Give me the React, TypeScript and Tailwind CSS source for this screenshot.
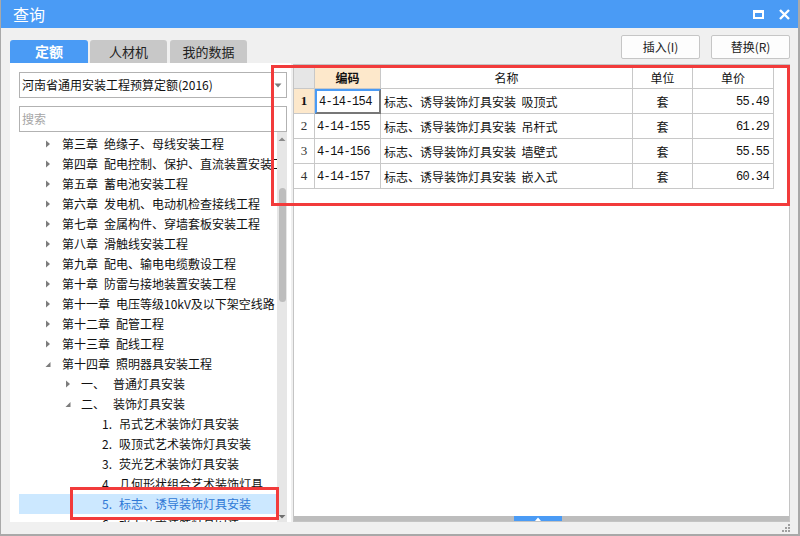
import type { ReactNode } from "react";

const CJK = { fontFamily: '"Noto Sans CJK SC", "Liberation Sans", sans-serif' };
const MONO = { fontFamily: '"Liberation Mono", "Noto Sans CJK SC", monospace' };

type TreeRow = {
  level: 0 | 1 | 2;
  arrow?: "right" | "down";
  head: string;
  text: string;
  selected?: boolean;
};

const treeRows: TreeRow[] = [
  { level: 0, arrow: "right", head: "第三章", text: "绝缘子、母线安装工程" },
  { level: 0, arrow: "right", head: "第四章", text: "配电控制、保护、直流装置安装工程" },
  { level: 0, arrow: "right", head: "第五章", text: "蓄电池安装工程" },
  { level: 0, arrow: "right", head: "第六章", text: "发电机、电动机检查接线工程" },
  { level: 0, arrow: "right", head: "第七章", text: "金属构件、穿墙套板安装工程" },
  { level: 0, arrow: "right", head: "第八章", text: "滑触线安装工程" },
  { level: 0, arrow: "right", head: "第九章", text: "配电、输电电缆敷设工程" },
  { level: 0, arrow: "right", head: "第十章", text: "防雷与接地装置安装工程" },
  { level: 0, arrow: "right", head: "第十一章", text: "电压等级10kV及以下架空线路" },
  { level: 0, arrow: "right", head: "第十二章", text: "配管工程" },
  { level: 0, arrow: "right", head: "第十三章", text: "配线工程" },
  { level: 0, arrow: "down", head: "第十四章", text: "照明器具安装工程" },
  { level: 1, arrow: "right", head: "一、", text: "普通灯具安装" },
  { level: 1, arrow: "down", head: "二、", text: "装饰灯具安装" },
  { level: 2, head: "1.", text: "吊式艺术装饰灯具安装" },
  { level: 2, head: "2.", text: "吸顶式艺术装饰灯具安装" },
  { level: 2, head: "3.", text: "荧光艺术装饰灯具安装" },
  { level: 2, head: "4.", text: "几何形状组合艺术装饰灯具" },
  { level: 2, head: "5.", text: "标志、诱导装饰灯具安装", selected: true },
  { level: 2, head: "6.", text: "水下艺术装饰灯具安装" },
];

const tableRows = [
  { code: "4-14-154", name: "标志、诱导装饰灯具安装  吸顶式", unit: "套", price: "55.49" },
  { code: "4-14-155", name: "标志、诱导装饰灯具安装  吊杆式", unit: "套", price: "61.29" },
  { code: "4-14-156", name: "标志、诱导装饰灯具安装  墙壁式", unit: "套", price: "55.55" },
  { code: "4-14-157", name: "标志、诱导装饰灯具安装  嵌入式", unit: "套", price: "60.34" },
];

function Arrow({ dir }: { dir?: "right" | "down" }) {
  if (!dir) return <span className="inline-block w-[6px]" />;
  if (dir === "right") {
    return (
      <svg width="6" height="8" viewBox="0 0 6 8" className="shrink-0">
        <path d="M1 0.5 L5 4 L1 7.5 Z" fill="#7c7c7c" />
      </svg>
    );
  }
  return (
    <svg width="6" height="8" viewBox="0 0 6 8" className="shrink-0">
      <path d="M5.5 2 L5.5 7 L0.5 7 Z" fill="#7c7c7c" />
    </svg>
  );
}

function Tree() {
  return (
    <div className="flex min-h-0 flex-1 pt-[2px]">
      <div className="flex min-w-0 flex-1 flex-col overflow-hidden">
        {treeRows.map((r, i) => {
          const color = r.selected ? "text-[#2f78d6]" : "text-[#111]";
          return (
            <div
              key={i}
              className={`flex h-[20px] shrink-0 items-center whitespace-nowrap text-[12px] ${color} ${
                r.selected ? "bg-[#cce8ff]" : ""
              }`}
              style={CJK}
            >
              {r.level === 0 && (
                <>
                  <span className="ml-[26px] mr-[11px] flex">
                    <Arrow dir={r.arrow} />
                  </span>
                  <span>{r.head}</span>
                  <span className="ml-[6px]">{r.text}</span>
                </>
              )}
              {r.level === 1 && (
                <>
                  <span className="ml-[46px] mr-[10px] flex">
                    <Arrow dir={r.arrow} />
                  </span>
                  <span className="w-[32px]">{r.head}</span>
                  <span>{r.text}</span>
                </>
              )}
              {r.level === 2 && (
                <>
                  <span className="ml-[83px] w-[17px]">{r.head}</span>
                  <span>{r.text}</span>
                </>
              )}
            </div>
          );
        })}
      </div>
      <div className="relative -mt-[2px] w-[10px] shrink-0 bg-[#e6e6e6]">
        <svg width="10" height="6" viewBox="0 0 10 6" className="absolute left-0 top-[4px]">
          <path d="M1.5 5 L5 1.5 L8.5 5 Z" fill="#8a8a8a" />
        </svg>
        <div className="absolute left-[2px] top-[56px] h-[114px] w-[7px] rounded-full bg-[#bdbdbd]" />
        <svg width="10" height="6" viewBox="0 0 10 6" className="absolute bottom-[2px] left-0">
          <path d="M1.5 1 L8.5 1 L5 4.5 Z" fill="#6f6f6f" />
        </svg>
      </div>
    </div>
  );
}

function Cell({
  children,
  className = "",
  style,
}: {
  children?: ReactNode;
  className?: string;
  style?: React.CSSProperties;
}) {
  return (
    <div
      className={`flex items-center border-b border-r border-[#c8c8c8] text-[12px] text-[#111] ${className}`}
      style={style}
    >
      {children}
    </div>
  );
}

function DataTable() {
  return (
    <div className="grid grid-cols-[21px_66px_252px_60px_81px] grid-rows-[21px_25px_25px_25px_25px] border-t border-[#d8d8d8]">
      <Cell className="bg-[#e6e6e6]" />
      <Cell className="justify-center bg-[#fde8cb] font-bold" style={CJK}>
        编码
      </Cell>
      <Cell className="justify-center" style={CJK}>
        名称
      </Cell>
      <Cell className="justify-center" style={CJK}>
        单位
      </Cell>
      <Cell className="justify-center" style={CJK}>
        单价
      </Cell>
      {tableRows.map((r, i) => (
        <div key={r.code} className="contents">
          <Cell
            className={`justify-center font-['Liberation_Serif'] text-[13px] ${
              i === 0 ? "bg-[#fde8cb] font-bold" : "bg-white text-[#333]"
            }`}
          >
            {i + 1}
          </Cell>
          <Cell
            className={`pl-[2px] pt-[1px] text-[11px] tracking-[-0.6px] ${
              i === 0 ? "border-b-2 border-l-2 border-r-2 border-t-2 border-b-[#777] border-l-[#4a9bf5] border-r-[#777] border-t-[#4a9bf5] pl-[1px]" : ""
            }`}
            style={MONO}
          >
            {r.code}
          </Cell>
          <Cell className="whitespace-pre pl-[3px] pt-[1px]" style={CJK}>
            {r.name}
          </Cell>
          <Cell className="justify-center pt-[1px]" style={CJK}>
            {r.unit}
          </Cell>
          <Cell className="justify-end pr-[4px] pt-[1px] text-[11px] tracking-[-0.6px]" style={MONO}>
            {r.price}
          </Cell>
        </div>
      ))}
    </div>
  );
}

export default function App() {
  return (
    <div
      className="relative flex h-[536px] w-[800px] flex-col overflow-hidden border-b-2 border-l border-r-2 border-[#a9a9a9] bg-[#f0f0f0]"
      style={CJK}
    >
      {/* title bar */}
      <div className="-ml-px -mr-[2px] flex h-[28px] shrink-0 items-center bg-[#4a9bf5] pl-[13px] pr-[10px]">
        <span className="text-[16px] text-white">查询</span>
        <div className="ml-auto flex items-center gap-[15px]">
          <div className="h-[9px] w-[11px] border-2 border-t-[3px] border-white" />
          <svg width="11" height="11" viewBox="0 0 11 11">
            <path d="M1 1 L10 10 M10 1 L1 10" stroke="#fff" strokeWidth="2.4" />
          </svg>
        </div>
      </div>

      {/* body */}
      <div className="flex min-h-0 flex-1 gap-[2px] pb-[12px] pl-[9px]">
        {/* left column */}
        <div className="flex w-[281px] flex-col pt-[12px]">
          <div className="flex h-[23px] gap-[2px]">
            <div className="flex w-[78px] items-center justify-center rounded-t-[3px] bg-[#4a9bf5] text-[14px] font-bold text-white">
              定额
            </div>
            <div className="flex w-[77px] items-center justify-center rounded-t-[3px] bg-[#c8c8c8] text-[13px] text-[#222]">
              人材机
            </div>
            <div className="ml-[1px] flex w-[77px] items-center justify-center rounded-t-[3px] bg-[#c8c8c8] text-[13px] text-[#222]">
              我的数据
            </div>
          </div>
          <div className="flex min-h-0 flex-1 flex-col bg-white pl-[9px] pr-[4px] pt-[9px]">
            <div className="relative flex h-[26px] items-center border border-[#b2b2b2] pl-[2px] text-[12px] text-[#111]">
              河南省通用安装工程预算定额(2016)
              <svg width="8" height="5" viewBox="0 0 8 5" className="absolute right-[4px] top-[10px]">
                <path d="M0.5 0.5 L7.5 0.5 L4 4.5 Z" fill="#7a7a7a" />
              </svg>
            </div>
            <div className="mt-[8px] flex h-[26px] items-center border border-[#b2b2b2] pl-[2px] text-[12px] text-[#a6a6a6]">
              搜索
            </div>
            <Tree />
          </div>
        </div>

        {/* right column */}
        <div className="flex w-[497px] flex-col">
          <div className="flex h-[36px] items-end justify-end gap-[11px] pb-[5px]">
            <button className="h-[24px] w-[79px] rounded-[2px] border border-[#c6c6c6] bg-[#fdfdfd] text-[12px] text-[#222]">
              插入(I)
            </button>
            <button className="h-[24px] w-[79px] rounded-[2px] border border-[#c6c6c6] bg-[#fdfdfd] text-[12px] text-[#222]">
              替换(R)
            </button>
          </div>
          <div className="flex min-h-0 flex-1 flex-col border border-[#c4c4c4] bg-white pt-[2px]">
            <DataTable />
            <div className="flex-1" />
            <div className="relative h-[5px] bg-[#bdbdbd]">
              <div className="absolute left-[220px] top-0 flex h-[5px] w-[48px] items-center justify-center bg-[#4a9bf5]">
                <svg width="6" height="4" viewBox="0 0 6 4">
                  <path d="M0 4 L3 0.5 L6 4 Z" fill="#fff" />
                </svg>
              </div>
            </div>
          </div>
        </div>
      </div>

      {/* resize grip */}
      <svg width="10" height="10" viewBox="0 0 10 10" className="absolute bottom-[1px] right-[7px]">
        <rect x="7" y="1" width="2" height="2" fill="#a0a0a0" />
        <rect x="4" y="4" width="2" height="2" fill="#a0a0a0" />
        <rect x="7" y="4" width="2" height="2" fill="#a0a0a0" />
        <rect x="1" y="7" width="2" height="2" fill="#a0a0a0" />
        <rect x="4" y="7" width="2" height="2" fill="#a0a0a0" />
        <rect x="7" y="7" width="2" height="2" fill="#a0a0a0" />
      </svg>

      {/* red annotation boxes */}
      <div className="pointer-events-none absolute left-[270px] top-[65px] h-[141px] w-[519px] border-[3px] border-[#f23b3b]" />
      <div className="pointer-events-none absolute left-[69px] top-[487px] h-[33px] w-[209px] border-[3px] border-[#f23b3b]" />
    </div>
  );
}
